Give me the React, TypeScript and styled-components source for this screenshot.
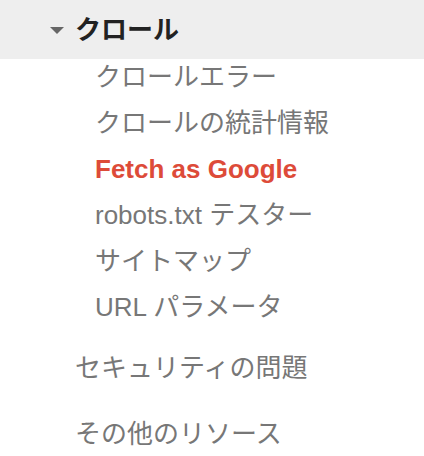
import React from "react";
import styled, { createGlobalStyle } from "styled-components";

const Global = createGlobalStyle`
  html, body { margin: 0; padding: 0; background: #fff; }
  body { font-family: "Liberation Sans", "Noto Sans CJK JP", Arial, sans-serif; }
`;

const Nav = styled.nav`
  width: 424px;
  display: flex;
  flex-direction: column;
`;

const SectionHeader = styled.div`
  height: 59px;
  background: #eeeeee;
  display: flex;
  align-items: center;
  padding-left: 50px;
  gap: 11px;
  box-sizing: border-box;
`;

const Caret = styled.span`
  width: 0;
  height: 0;
  border-left: 7px solid transparent;
  border-right: 7px solid transparent;
  border-top: 7px solid #666;
  margin-top: 2px;
`;

const HeaderLabel = styled.span`
  font-size: 26px;
  font-weight: bold;
  color: #222;
  line-height: 36px;
`;

const SubList = styled.ul`
  list-style: none;
  margin: 0;
  padding: 0 0 7px 95px;
  display: flex;
  flex-direction: column;
  gap: 10px;
`;

const SubItem = styled.li<{ $active?: boolean }>`
  height: 36px;
  line-height: 36px;
  font-size: 26px;
  white-space: nowrap;
  color: ${(p) => (p.$active ? "#dd4b39" : "#777")};
  font-weight: ${(p) => (p.$active ? "bold" : "normal")};
`;

const TopItem = styled.div`
  height: 66px;
  display: flex;
  align-items: center;
  padding-left: 75px;
  font-size: 26px;
  color: #777;
  white-space: nowrap;
`;

const subs = [
  "クロールエラー",
  "クロールの統計情報",
  "Fetch as Google",
  "robots.txt テスター",
  "サイトマップ",
  "URL パラメータ",
];

export default function App() {
  return (
    <>
      <Global />
      <Nav>
        <SectionHeader>
          <Caret />
          <HeaderLabel>クロール</HeaderLabel>
        </SectionHeader>
        <SubList>
          {subs.map((s) => (
            <SubItem key={s} $active={s === "Fetch as Google"}>
              {s}
            </SubItem>
          ))}
        </SubList>
        <TopItem>セキュリティの問題</TopItem>
        <TopItem>その他のリソース</TopItem>
      </Nav>
    </>
  );
}
